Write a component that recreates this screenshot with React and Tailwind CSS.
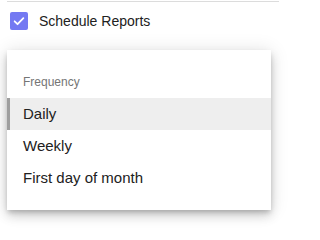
export default function App() {
  const options = ["Daily", "Weekly", "First day of month"];
  return (
    <div className="w-[286px] h-[238px] bg-white font-['Liberation_Sans',Arial,sans-serif]">
      <div className="mx-[7px] mt-px h-px bg-[#dcdcdc]" />
      <div className="flex items-center pl-[10px] pt-[10px]">
        <span className="flex h-[18px] w-[18px] items-center justify-center rounded-[2px] bg-[#7479f2]">
          <svg width="14" height="14" viewBox="0 0 24 24" fill="none">
            <path d="M4.5 12.5l5 5L19.5 7" stroke="white" strokeWidth="3" strokeLinecap="round" strokeLinejoin="round" />
          </svg>
        </span>
        <span className="ml-[11px] text-[14px] leading-[18px] text-[#212121]">Schedule Reports</span>
      </div>
      <div className="mx-[7px] mt-[20px] w-[264px] bg-white py-4 shadow-[0_3px_5px_-1px_rgba(0,0,0,0.2),0_6px_10px_0_rgba(0,0,0,0.14),0_1px_18px_0_rgba(0,0,0,0.12)]">
        <div className="flex h-8 items-center pl-4 text-[12px] text-[#757575]">Frequency</div>
        {options.map((o, i) => (
          <div
            key={o}
            className={
              i === 0
                ? "flex h-8 items-center border-l-[3px] border-[#9e9e9e] bg-[#eeeeee] pl-[13px] text-[15px] text-[#212121]"
                : "flex h-8 items-center pl-4 text-[15px] text-[#212121]"
            }
          >
            {o}
          </div>
        ))}
      </div>
    </div>
  );
}
